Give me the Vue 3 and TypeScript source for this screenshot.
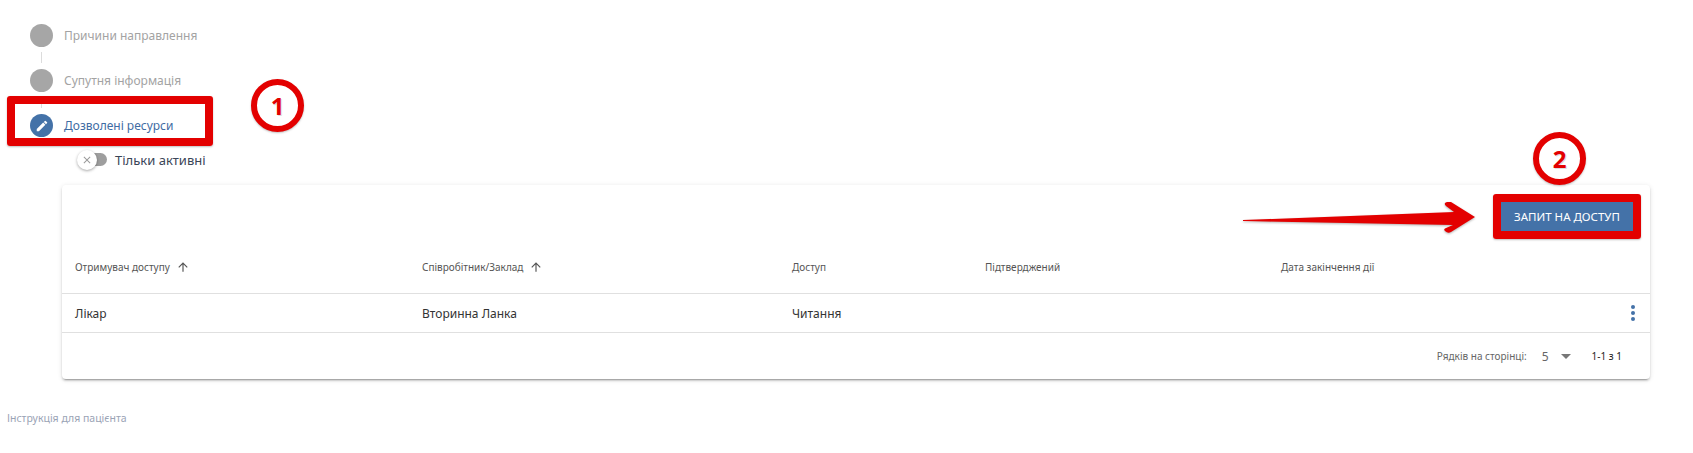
<script setup lang="ts">
interface Step { label: string; state: 'done' | 'active' }
const steps: Step[] = [
  { label: 'Причини направлення', state: 'done' },
  { label: 'Супутня інформація', state: 'done' },
  { label: 'Дозволені ресурси', state: 'active' },
]
const columns = ['Отримувач доступу', 'Співробітник/Заклад', 'Доступ', 'Підтверджений', 'Дата закінчення дії']
const sortable = [true, true, false, false, false]
const row = ['Лікар', 'Вторинна Ланка', 'Читання', '', '']
</script>

<template>
  <div class="page">
    <div class="stepper">
      <template v-for="(s, i) in steps" :key="s.label">
        <div class="step" :class="s.state">
          <span class="dot">
            <svg v-if="s.state === 'active'" viewBox="0 0 24 24" width="14" height="14">
              <path fill="#fff" d="M3 17.25V21h3.75L17.81 9.94l-3.75-3.75L3 17.25zM20.71 7.04a1 1 0 0 0 0-1.41l-2.34-2.34a1 1 0 0 0-1.41 0l-1.83 1.83 3.75 3.75 1.83-1.83z"/>
            </svg>
          </span>
          <span class="step-label">{{ s.label }}</span>
        </div>
        <div v-if="i < steps.length - 1" class="connector"></div>
      </template>
    </div>

    <div class="toggle-row">
      <span class="switch">
        <span class="track"></span>
        <span class="knob">
          <svg viewBox="0 0 24 24" width="12" height="12">
            <path fill="#9a9a9a" d="M19 6.41 17.59 5 12 10.59 6.41 5 5 6.41 10.59 12 5 17.59 6.41 19 12 13.41 17.59 19 19 17.59 13.41 12z"/>
          </svg>
        </span>
      </span>
      <span class="toggle-label">Тільки активні</span>
    </div>

    <section class="card">
      <div class="toolbar">
        <button class="request" type="button">ЗАПИТ НА ДОСТУП</button>
      </div>
      <div class="grid head">
        <div v-for="(c, i) in columns" :key="c" class="th">
          {{ c }}
          <svg v-if="sortable[i]" class="sort" viewBox="0 0 24 24" width="14" height="14">
            <path fill="#555" d="M4 12l1.41 1.41L11 7.83V20h2V7.83l5.58 5.59L20 12l-8-8z"/>
          </svg>
        </div>
      </div>
      <div class="grid body">
        <div v-for="(c, i) in row" :key="i" class="td">{{ c }}</div>
        <span class="more"><i></i><i></i><i></i></span>
      </div>
      <div class="footer">
        <span class="rows-label">Рядків на сторінці:</span>
        <span class="rows-value">5</span>
        <span class="caret"></span>
        <span class="range">1-1 з 1</span>
      </div>
    </section>

    <a class="guide">Інструкція для пацієнта</a>

    <!-- annotations -->
    <div class="mark box-one"></div>
    <div class="badge badge-one">1</div>
    <div class="mark box-two"></div>
    <div class="badge badge-two">2</div>
    <svg class="arrow" viewBox="0 0 240 40" width="240" height="40">
      <path fill="#e30000" d="M0 20 L211 12 L203 6 Q200 3 204 2 L208 2 L232 17 L208 32 Q205 34 202 31 Q200 29 203 28 L210 25 L0 21 Z"/>
    </svg>
  </div>
</template>

<style>
html, body { margin: 0; background: #fff; }
</style>

<style scoped>
.page {
  position: relative;
  width: 1693px;
  height: 453px;
  overflow: hidden;
  font-family: "Noto Sans", sans-serif;
  color: rgba(0, 0, 0, 0.87);
  box-sizing: border-box;
  padding-top: 24px;
}
.stepper { padding-left: 30px; }
.step { display: flex; align-items: center; gap: 11px; height: 23px; }
.dot {
  width: 23px; height: 23px; border-radius: 50%;
  background: #a6a6a6;
  display: flex; align-items: center; justify-content: center;
  flex: none;
}
.step.active .dot { background: #4472a8; }
.step-label { font-size: 12px; color: #a3a3a3; white-space: nowrap; }
.step.active .step-label { color: #3f6ca3; }
.connector { width: 1px; height: 22px; margin-left: 11px; background: #dcdcdc; background-clip: content-box; box-sizing: border-box; padding: 5px 0 6px; }

.toggle-row { display: flex; align-items: center; margin: 10px 0 0 76px; height: 26px; }
.switch { position: relative; width: 34px; height: 20px; display: block; }
.track { position: absolute; left: 7px; top: 3px; width: 24px; height: 13px; border-radius: 7px; background: #9e9e9e; }
.knob {
  position: absolute; left: 1px; top: 0; width: 20px; height: 20px; border-radius: 50%;
  background: #fff; box-shadow: 0 1px 3px rgba(0,0,0,.35);
  display: flex; align-items: center; justify-content: center;
}
.toggle-label { margin-left: 5px; font-size: 13px; color: #3a4557; white-space: nowrap; }

.card {
  margin: 12px 43px 0 62px;
  border-radius: 4px;
  background: #fff;
  box-shadow: 0 3px 1px -2px rgba(0,0,0,.2), 0 2px 2px 0 rgba(0,0,0,.14), 0 1px 5px 0 rgba(0,0,0,.12);
}
.toolbar { height: 62px; display: flex; justify-content: flex-end; align-items: flex-start; padding: 17px 17px 0 0; box-sizing: border-box; }
.request {
  width: 132px; height: 29px; border: 0; padding: 0;
  background: #4472a8; color: #fff;
  font: 400 11.5px "Noto Sans", sans-serif;
  white-space: nowrap;
}
.grid { display: grid; grid-template-columns: 347px 370px 193px 296px 1fr; padding-left: 13px; position: relative; box-sizing: border-box; }
.head { height: 47px; align-items: center; border-bottom: 1px solid #e0e0e0; padding-bottom: 6px; }
.th { font: 400 10px "Noto Sans", sans-serif; color: #555; white-space: nowrap; display: flex; align-items: center; gap: 6px; }
.body { height: 39px; align-items: center; border-bottom: 1px solid #e0e0e0; }
.td { font: 400 12px "Noto Sans", sans-serif; color: #333; white-space: nowrap; }
.more { position: absolute; right: 15px; top: 11px; display: flex; flex-direction: column; gap: 2px; }
.more i { width: 4px; height: 4px; border-radius: 50%; background: #4472a8; display: block; }
.footer { height: 46px; display: flex; align-items: center; justify-content: flex-end; padding-right: 28px; color: #555; }
.rows-label { font-size: 10px; color: #666; }
.rows-value { font-size: 12px; margin-left: 15px; color: #666; }
.caret { width: 0; height: 0; margin-left: 12px; border-left: 5px solid transparent; border-right: 5px solid transparent; border-top: 5px solid #777; }
.range { font-size: 10px; margin-left: 21px; color: #222; }

.guide { position: absolute; left: 7px; top: 411px; font-size: 10.5px; color: #9aa3b5; white-space: nowrap; }

.mark { position: absolute; border: 8px solid #e30000; border-radius: 3px; box-sizing: border-box; box-shadow: 0 1px 2px rgba(0,0,0,.25); }
.box-one { left: 7px; top: 96px; width: 206px; height: 50px; }
.box-two { left: 1493px; top: 194px; width: 148px; height: 45px; }
.badge {
  position: absolute; width: 53px; height: 53px; box-sizing: border-box;
  border: 6px solid #e30000; border-radius: 50%; background: #fff;
  color: #e30000; font: 700 24px/41px "Noto Sans", sans-serif; text-align: center;
  box-shadow: 0 1px 2px rgba(0,0,0,.25);
  text-shadow: 1px 1px 0 #ddd;
}
.badge-one { left: 251px; top: 79px; }
.badge-two { left: 1533px; top: 132px; }
.arrow { position: absolute; left: 1243px; top: 200px; filter: drop-shadow(0 1px 1px rgba(0,0,0,.3)); }
</style>
